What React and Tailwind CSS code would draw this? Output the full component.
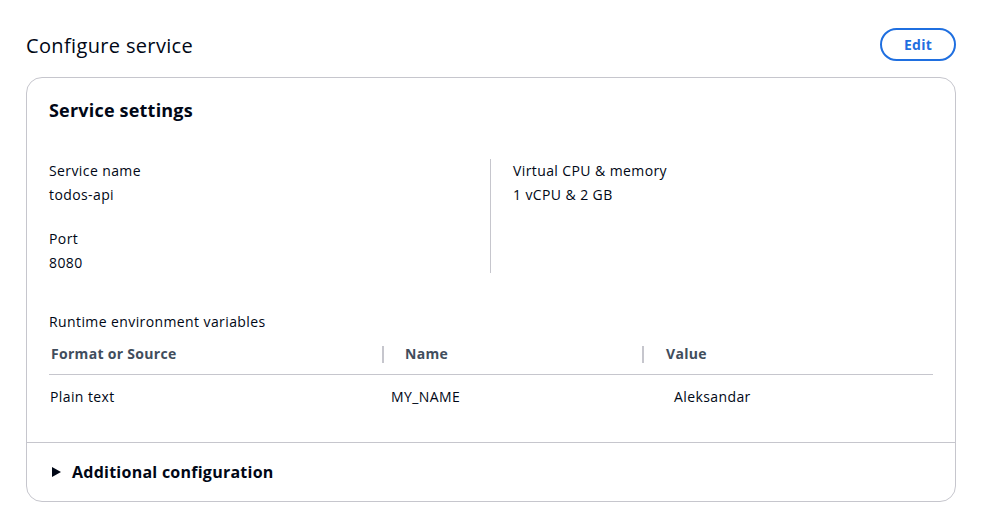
import React from "react";

export default function App() {
  const font = { fontFamily: '"Open Sans", "Noto Sans", sans-serif' };
  return (
    <div className="w-[993px] h-[510px] bg-white text-[#000716]" style={font}>
      <div className="pl-[26px] pr-[37px] pt-[28px]">
        <div className="flex items-center justify-between h-[33px]">
          <h2 className="text-[20px] leading-[24px] font-normal mt-[3px] tracking-[0.35px]">Configure service</h2>
          <button className="w-[76px] h-[33px] rounded-full border-2 border-[#1f6fe0] text-[#1f6fe0] text-[14px] font-bold leading-none tracking-[0.3px]">
            Edit
          </button>
        </div>
        <div className="mt-[16px] border border-[#c6c6cd] rounded-[16px] h-[425px] flex flex-col">
          <div className="px-[22px] pt-[21px]">
            <h3 className="text-[18px] leading-[22px] font-bold tracking-[0.2px]">Service settings</h3>
            <div className="mt-[40px] grid grid-cols-2 text-[14px] leading-[20px] tracking-[0.4px]">
              <div className="border-r border-[#c6c6cd] pr-5 -mt-[2px] pt-[2px]">
                <div>Service name</div>
                <div className="mt-[4px]">todos-api</div>
                <div className="mt-[24px]">Port</div>
                <div className="mt-[4px]">8080</div>
              </div>
              <div className="pl-[22px]">
                <div>Virtual CPU &amp; memory</div>
                <div className="mt-[4px]">1 vCPU &amp; 2 GB</div>
              </div>
            </div>
            <div className="mt-[39px] text-[14px] leading-[20px] tracking-[0.4px]">Runtime environment variables</div>
            <div className="mt-[12px] text-[14px] leading-[20px] tracking-[0.4px]">
              <div className="border-b border-[#c6c6cd] pb-[10px]">
                <div className="flex items-center h-[20px] font-bold text-[#414d5c] tracking-[0.3px]">
                  <div className="w-[333px] pl-[2px]">Format or Source</div>
                  <div className="w-[2px] h-[17px] bg-[#c6c6cd]"></div>
                  <div className="w-[258px] pl-[21px]">Name</div>
                  <div className="w-[2px] h-[17px] bg-[#c6c6cd]"></div>
                  <div className="pl-[22px]">Value</div>
                </div>
              </div>
              <div className="flex items-center h-[46px] pb-[2px]">
                <div className="w-[342px] pl-[1px]">Plain text</div>
                <div className="w-[283px]">MY_NAME</div>
                <div>Aleksandar</div>
              </div>
            </div>
          </div>
          <div className="mt-[21px] border-t border-[#c6c6cd] flex-1 flex items-center pl-[25px] pb-[1px]">
            <svg width="9" height="10" viewBox="0 0 9 10" className="mr-[11px]">
              <path d="M0 0 L9 5 L0 10 Z" fill="#000716" />
            </svg>
            <span className="text-[16px] leading-[20px] font-bold tracking-[0.25px]">Additional configuration</span>
          </div>
        </div>
      </div>
    </div>
  );
}
